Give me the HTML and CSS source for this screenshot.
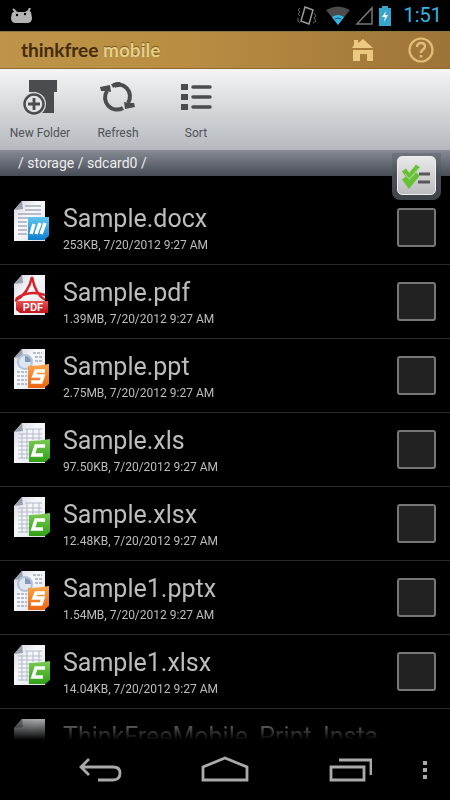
FILE: index.html
```html
<!DOCTYPE html>
<html lang="en">
<head>
  <meta charset="UTF-8"/>
  <meta name="viewport" content="width=device-width, initial-scale=1.0"/>
  <title>thinkfree mobile</title>
  <link rel="stylesheet" href="styles.css">
</head>
<body>

<!-- shared icon shapes -->
<svg class="defs" aria-hidden="true">
  <defs>
    <linearGradient id="paper" x1="0" y1="0" x2="1" y2="1">
      <stop offset="0" stop-color="#ced3dc"/>
      <stop offset="0.4" stop-color="#f8f9fb"/>
      <stop offset="1" stop-color="#dde1e9"/>
    </linearGradient>
    <linearGradient id="blue" x1="0" y1="0" x2="0" y2="1">
      <stop offset="0" stop-color="#62c5ee"/>
      <stop offset="1" stop-color="#0c7fd0"/>
    </linearGradient>
    <linearGradient id="orange" x1="0" y1="0" x2="0" y2="1">
      <stop offset="0" stop-color="#f9a84e"/>
      <stop offset="1" stop-color="#ec6410"/>
    </linearGradient>
    <linearGradient id="green" x1="0" y1="0" x2="0" y2="1">
      <stop offset="0" stop-color="#7bcb52"/>
      <stop offset="1" stop-color="#2fa016"/>
    </linearGradient>
    <linearGradient id="red" x1="0" y1="0" x2="0" y2="1">
      <stop offset="0" stop-color="#e85454"/>
      <stop offset="1" stop-color="#c00f18"/>
    </linearGradient>
    <symbol id="page" viewBox="0 0 36 42">
      <path d="M8 0H31V40H0V9Z" fill="url(#paper)"/>
      <path d="M8 0L9 8L0 9Z" fill="#9aa1ae"/>
    </symbol>
    <symbol id="doc" viewBox="0 0 36 42">
      <use href="#page" width="36" height="42"/>
      <path d="M11 5H27M11 9H27M4 13H27M4 17H14M4 21H13M4 25H13M4 29H13M4 33H13" stroke="#a4abc0" stroke-width="1.5"/>
      <path d="M14 16H35V35L30 39H14Z" fill="url(#blue)"/>
      <path d="M20 23L17 33M26 22L22 33M31 22L27 33" stroke="#fff" stroke-width="3.5"/>
    </symbol>
    <symbol id="pdf" viewBox="0 0 36 42">
      <use href="#page" width="36" height="42"/>
      <path d="M1 26C10 21 16 12 18 2C20 12 24 21 31 25M2 24C10 17 22 17 31 20" fill="none" stroke="#d8232b" stroke-width="2.5"/>
      <path d="M2 26H34V38H6L2 35Z" fill="url(#red)"/>
      <text class="pdf-label" x="19" y="36" text-anchor="middle">PDF</text>
    </symbol>
    <symbol id="ppt" viewBox="0 0 36 42">
      <use href="#page" width="36" height="42"/>
      <path d="M19 4H28M21 8H28M21 12H28M3 23H13M3 27H13M3 31H13M3 35H13" stroke="#a4abc0" stroke-width="1.5" stroke-dasharray="3 1"/>
      <circle cx="11" cy="13" r="7" fill="#dfe6f0" stroke="#b5c2d6" stroke-width="2"/>
      <path d="M11 13V7A6 6 0 0 1 17 13Z" fill="#8299bd"/>
      <path d="M14 17Q24 17 35 15V35L30 39H14Z" fill="url(#orange)"/>
      <path d="M31 22H22L20 27H29L27 33H17" fill="none" stroke="#fff" stroke-width="3.5"/>
    </symbol>
    <symbol id="xls" viewBox="0 0 36 42">
      <use href="#page" width="36" height="42"/>
      <path d="M11 6H28M4 11H28M4 15H28M4 19H15M4 23H15M4 27H15M4 31H15M4 35H15M8 10V36M13 6V36M19 6V17M25 6V17" stroke="#b3b9c9"/>
      <path d="M15 18Q25 18 36 16V35L31 39H15Z" fill="url(#green)"/>
      <path d="M31 23H22L19 32H29" fill="none" stroke="#fff" stroke-width="3.5"/>
    </symbol>
  </defs>
</svg>

<div class="status">
  <svg class="robot" width="24" height="16" viewBox="0 0 24 16">
    <path d="M3 1L6 4M20 0L18 4" stroke="#b4b4b4" stroke-width="2"/>
    <path d="M2 5Q5 2 8 4H15Q18 1 21 4L22 10Q22 15 17 15H6Q1 15 1 10Z" fill="#b4b4b4"/>
    <circle cx="7" cy="7" r="1.2" fill="#000"/><circle cx="15" cy="6" r="1.2" fill="#000"/>
  </svg>
  <div class="status-right">
    <svg width="20" height="22" viewBox="0 0 20 22" fill="none" stroke="#777">
      <path d="M8 2L16 5L12 19L4 16Z" stroke="#999" stroke-width="1.5"/>
      <path d="M3 3L1 5L3 7L1 9L3 11M1 13V16L3 18M17 8L19 11L17 13L19 16L16 18" stroke="#666"/>
    </svg>
    <svg width="26" height="20" viewBox="0 0 26 20">
      <path d="M1 4Q13 -3 25 4L13 19Z" fill="#4b4b4b"/>
      <path d="M7 11Q13 7 19 11L13 19Z" fill="#33b5e5"/>
      <path d="M10 13Q13 11 16 13" fill="none" stroke="#124a60"/>
    </svg>
    <svg width="19" height="20" viewBox="0 0 19 20">
      <path d="M17 2V18H2Z" fill="none" stroke="#777" stroke-width="1.5"/>
    </svg>
    <svg class="battery" width="14" height="20" viewBox="0 0 14 20">
      <path d="M4 0H10V2H13V20H1V2H4Z" fill="#38a5cb"/>
      <path d="M8 5L4 11H7L6 16L10 9H7Z" fill="#fff"/>
    </svg>
    <span class="clock">1:51</span>
  </div>
</div>

<header class="brand">
  <h1>thinkfree <span>mobile</span></h1>
  <nav>
    <a href="#home" aria-label="Home">
      <svg width="24" height="26" viewBox="0 0 24 26" fill="#ecc981">
        <path d="M3 3H7V6L12 2L22 11H1L3 8Z"/>
        <path d="M2 13H22V24H16V17H9V24H2Z"/>
      </svg>
    </a>
    <a href="#help" aria-label="Help">
      <svg width="28" height="28" viewBox="0 0 28 28" fill="none" stroke="#e0bd76">
        <circle cx="14" cy="14" r="11.5" stroke-width="2.2"/>
        <path d="M10 11Q10 7 14 7Q18 7 18 10.500Q18 12 16 13.500Q14 15 14 17" stroke-width="2.4"/>
        <path d="M14 19V21.500" stroke-width="2.6"/>
      </svg>
    </a>
  </nav>
</header>

<div class="toolbar">
  <button type="button">
    <svg width="36" height="38" viewBox="0 0 36 38">
      <path d="M7 2H35V14H32V35H14V14H7Z" fill="#4b4c4f"/>
      <circle cx="12" cy="26" r="12" fill="#d7d9db"/>
      <circle cx="12" cy="26" r="9.500" fill="#e2e3e5" stroke="#4b4c4f" stroke-width="2.500"/>
      <path d="M12 20V32M6 26H18" stroke="#4b4c4f" stroke-width="2.800"/>
    </svg>
    New Folder
  </button>
  <button type="button">
    <svg width="36" height="38" viewBox="0 0 36 38" fill="none" stroke="#4b4c4f">
      <path d="M12 8A12 12 0 0 1 28 25M23 30A12 12 0 0 1 7 13" stroke-width="4"/>
      <path d="M14 7.500A12 12 0 0 1 20 6.500" stroke-width="5"/>
      <path d="M0 9L10 7L11 14L5 13L1 13ZM35 29L25 31L24 24L29 25L34 25Z" fill="#4b4c4f" stroke="none"/>
    </svg>
    Refresh
  </button>
  <button type="button">
    <svg width="36" height="38" viewBox="0 0 36 38" fill="#4b4c4f">
      <path d="M3 6H10V12H3ZM3 16H10V22H3ZM3 26H10V32H3Z"/>
      <path d="M15 9H32M15 19H32M15 29H32" stroke="#4b4c4f" stroke-width="3.500" stroke-linecap="round"/>
    </svg>
    Sort
  </button>
</div>

<div class="path">
  / storage / sdcard0 /
  <div class="tab">
    <button type="button" aria-label="Select all">
      <svg width="32" height="32" viewBox="0 0 32 32" fill="none">
        <path d="M18 14H29M17 22H29" stroke="#55575b" stroke-width="3"/>
        <path d="M3 10L8 17L17 6" stroke="#66c136" stroke-width="5"/>
        <path d="M3 18L8 25L17 14" stroke="#66c136" stroke-width="5"/>
        <path d="M4 14L8 19L18 8" stroke="#b3df99"/>
      </svg>
    </button>
  </div>
</div>

<ul class="files">
  <li>
    <svg class="icon"><use href="#doc"/></svg>
    <label for="f1">Sample.docx <small>253KB, 7/20/2012 9:27 AM</small></label>
    <input type="checkbox" id="f1">
  </li>
  <li>
    <svg class="icon"><use href="#pdf"/></svg>
    <label for="f2">Sample.pdf <small>1.39MB, 7/20/2012 9:27 AM</small></label>
    <input type="checkbox" id="f2">
  </li>
  <li>
    <svg class="icon"><use href="#ppt"/></svg>
    <label for="f3">Sample.ppt <small>2.75MB, 7/20/2012 9:27 AM</small></label>
    <input type="checkbox" id="f3">
  </li>
  <li>
    <svg class="icon"><use href="#xls"/></svg>
    <label for="f4">Sample.xls <small>97.50KB, 7/20/2012 9:27 AM</small></label>
    <input type="checkbox" id="f4">
  </li>
  <li>
    <svg class="icon"><use href="#xls"/></svg>
    <label for="f5">Sample.xlsx <small>12.48KB, 7/20/2012 9:27 AM</small></label>
    <input type="checkbox" id="f5">
  </li>
  <li>
    <svg class="icon"><use href="#ppt"/></svg>
    <label for="f6">Sample1.pptx <small>1.54MB, 7/20/2012 9:27 AM</small></label>
    <input type="checkbox" id="f6">
  </li>
  <li>
    <svg class="icon"><use href="#xls"/></svg>
    <label for="f7">Sample1.xlsx <small>14.04KB, 7/20/2012 9:27 AM</small></label>
    <input type="checkbox" id="f7">
  </li>
  <li>
    <svg class="icon"><use href="#page"/></svg>
    <span class="name">ThinkFreeMobile_Print_Insta</span>
  </li>
</ul>

<div class="navbar">
  <div class="keys">
    <button type="button" aria-label="Back">
      <svg width="44" height="28" viewBox="0 0 44 28" fill="none" stroke="#aaa" stroke-width="2.800">
        <path d="M11 3L3 11L11 19M3 11H35Q42 11 42 17Q42 24 35 24H20"/>
      </svg>
    </button>
    <button type="button" aria-label="Home screen">
      <svg width="48" height="28" viewBox="0 0 48 28" fill="none" stroke="#aaa" stroke-width="2.800">
        <path d="M2 24V11L24 2L46 11V24Z"/>
      </svg>
    </button>
    <button type="button" aria-label="Recent apps">
      <svg width="44" height="28" viewBox="0 0 44 28" fill="none" stroke="#aaa" stroke-width="2.800">
        <path d="M3 11H36V24H3ZM11 4H43V19"/>
      </svg>
    </button>
  </div>
  <button type="button" aria-label="More options">
    <svg width="6" height="22" viewBox="0 0 6 22" fill="#aaa">
      <path d="M1 2H5V6H1ZM1 9H5V13H1ZM1 16H5V20H1Z"/>
    </svg>
  </button>
</div>

</body>
</html>
```

FILE: styles.css
```css
* {
  box-sizing: border-box;
}

body {
  margin: 0;
  height: 100vh;
  display: flex;
  flex-direction: column;
  overflow: hidden;
  background-color: #000;
  color: #bdbdbd;
  font-family: Roboto, "Liberation Sans", sans-serif;
}

button {
  padding: 0;
  border: none;
  background: none;
  font-family: inherit;
  cursor: pointer;
}

svg {
  display: block;
}

.defs {
  position: absolute;
  width: 0;
  height: 0;
}

.status {
  flex: none;
  height: 31px;
  padding: 0 8px 0 10px;
  display: flex;
  align-items: center;
  justify-content: space-between;
}

.status-right {
  display: flex;
  align-items: center;
  gap: 4px;
}

.status-right svg:first-child {
  margin-right: 4px;
}

.clock {
  margin-left: 7px;
  font-size: 20px;
  line-height: 31px;
  color: #33b5e5;
}

.brand {
  flex: none;
  height: 38px;
  padding: 0 15px 0 21px;
  display: flex;
  align-items: center;
  justify-content: space-between;
  background: linear-gradient(to right, #bd9449, #b98e43 40%, #9d7438);
  border-top: 1px solid #8d7a3c;
  border-bottom: 1px solid #92692c;
}

.brand h1 {
  margin: 0;
  font-family: Lato, sans-serif;
  font-size: 19px;
  line-height: 36px;
  font-weight: bold;
  color: #452b0d;
}

.brand h1 span {
  color: #e6d089;
  text-shadow: 0 -1px 1px #71521f;
}

.brand nav {
  display: flex;
  align-items: center;
  gap: 32px;
}

.toolbar {
  flex: none;
  height: 81px;
  padding: 9px 1px 0;
  display: flex;
  background: linear-gradient(#f5f5f6, #d5d7da 50%, #b5b9bf);
}

.toolbar button {
  width: 78px;
  height: 64px;
  display: flex;
  flex-direction: column;
  align-items: center;
  gap: 9px;
  font-size: 12px;
  line-height: 16px;
  color: #505156;
}

.path {
  flex: none;
  position: relative;
  height: 26px;
  padding-left: 18px;
  font-size: 14px;
  line-height: 26px;
  color: #eee;
  background: linear-gradient(#878b94, #666b75 50%, #484c55);
}

/* hangs over the first rows of the list */
.tab {
  position: absolute;
  top: 3px;
  right: 9px;
  width: 49px;
  height: 47px;
  padding: 3px 5px;
  border-radius: 0 0 8px 8px;
  background: linear-gradient(#70747e, #484c55 50%, #3f434a);
}

.tab button {
  width: 39px;
  height: 39px;
  padding: 3px;
  border: 1px solid #eee;
  border-radius: 5px;
  background: linear-gradient(#e9e9e9, #bcbcbe);
}

.files {
  flex: 1;
  min-height: 0;
  margin: 0;
  padding: 15px 0 0;
  list-style: none;
  overflow: hidden;
  -webkit-mask-image: linear-gradient(to top, transparent, #000 30px);
  mask-image: linear-gradient(to top, transparent, #000 30px);
}

.files li {
  height: 74px;
  padding: 0 14px;
  display: flex;
  align-items: flex-start;
  border-bottom: 1px solid #2b2b2b;
}

.icon {
  flex: none;
  width: 36px;
  height: 42px;
  margin-top: 10px;
}

.files label,
.name {
  flex: 1;
  min-width: 0;
  margin-left: 13px;
  padding-top: 12px;
  font-size: 25px;
  line-height: 32px;
}

.files small {
  display: block;
  font-size: 12px;
  line-height: 20px;
}

.files input {
  appearance: none;
  width: 39px;
  height: 39px;
  margin: 17px 0 0;
  border: 2px solid #777;
  border-radius: 3px;
  background-color: #222;
}

.pdf-label {
  font-size: 11px;
  font-weight: bold;
  fill: #fff;
}

.navbar {
  flex: none;
  height: 60px;
  padding: 0 22px 0 78px;
  display: flex;
  align-items: center;
  justify-content: space-between;
}

.keys {
  flex: 1;
  margin-right: 50px;
  display: flex;
  justify-content: space-between;
}
```
